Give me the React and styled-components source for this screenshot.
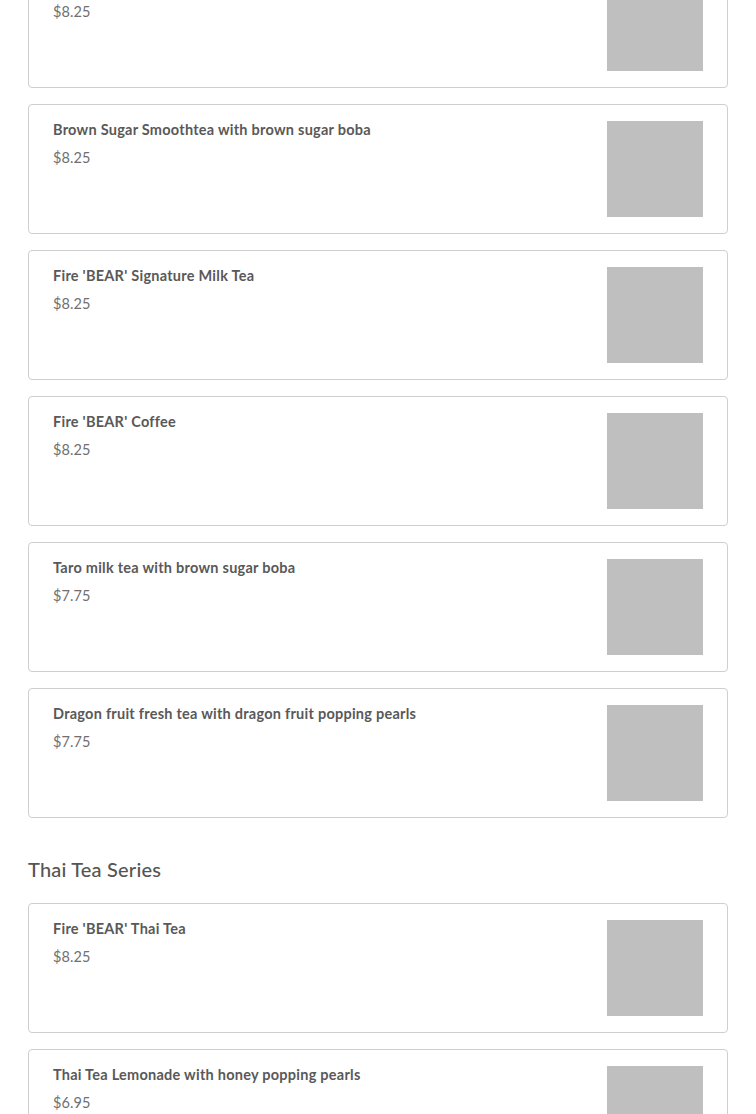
import React from 'react';
import styled, { createGlobalStyle } from 'styled-components';

const GlobalStyle = createGlobalStyle`
  body {
    margin: 0;
    background: #fff;
    font-family: Lato, 'Open Sans', sans-serif;
  }
`;

const Page = styled.div`
  padding: 0 28px;
  margin-top: -42px;
`;

const List = styled.div`
  display: flex;
  flex-direction: column;
  gap: 16px;
`;

const Card = styled.div`
  display: flex;
  justify-content: space-between;
  border: 1px solid #cfcfcf;
  border-radius: 4px;
  padding: 16px 24px;
  background: #fff;
`;

const Info = styled.div`
  display: flex;
  flex-direction: column;
  gap: 12px;
  padding-top: 1px;
`;

const Name = styled.div`
  font-size: 14.5px;
  line-height: 16px;
  font-weight: 700;
  letter-spacing: 0.25px;
  color: #595959;
`;

const Price = styled.div`
  font-size: 14.5px;
  line-height: 16px;
  font-weight: 400;
  letter-spacing: 0.1px;
  color: #707070;
`;

const Thumb = styled.div`
  width: 96px;
  height: 96px;
  flex-shrink: 0;
  background: #bfbfbf;
`;

const SectionTitle = styled.h2`
  margin: 39px 0 22px;
  font-size: 20px;
  line-height: 24px;
  font-weight: 500;
  letter-spacing: 0.2px;
  color: #555;
`;

const milkTea = [
  { name: 'Brown Sugar Milk Tea', price: '$8.25' },
  { name: 'Brown Sugar Smoothtea with brown sugar boba', price: '$8.25' },
  { name: "Fire 'BEAR' Signature Milk Tea", price: '$8.25' },
  { name: "Fire 'BEAR' Coffee", price: '$8.25' },
  { name: 'Taro milk tea with brown sugar boba', price: '$7.75' },
  { name: 'Dragon fruit fresh tea with dragon fruit popping pearls', price: '$7.75' },
];

const thaiTea = [
  { name: "Fire 'BEAR' Thai Tea", price: '$8.25' },
  { name: 'Thai Tea Lemonade with honey popping pearls', price: '$6.95' },
];

const Item = ({ name, price }) => (
  <Card>
    <Info>
      <Name>{name}</Name>
      <Price>{price}</Price>
    </Info>
    <Thumb />
  </Card>
);

const App = () => (
  <Page>
    <GlobalStyle />
    <List>
      {milkTea.map((item) => (
        <Item key={item.name} {...item} />
      ))}
    </List>
    <SectionTitle>Thai Tea Series</SectionTitle>
    <List>
      {thaiTea.map((item) => (
        <Item key={item.name} {...item} />
      ))}
    </List>
  </Page>
);

export default App;
